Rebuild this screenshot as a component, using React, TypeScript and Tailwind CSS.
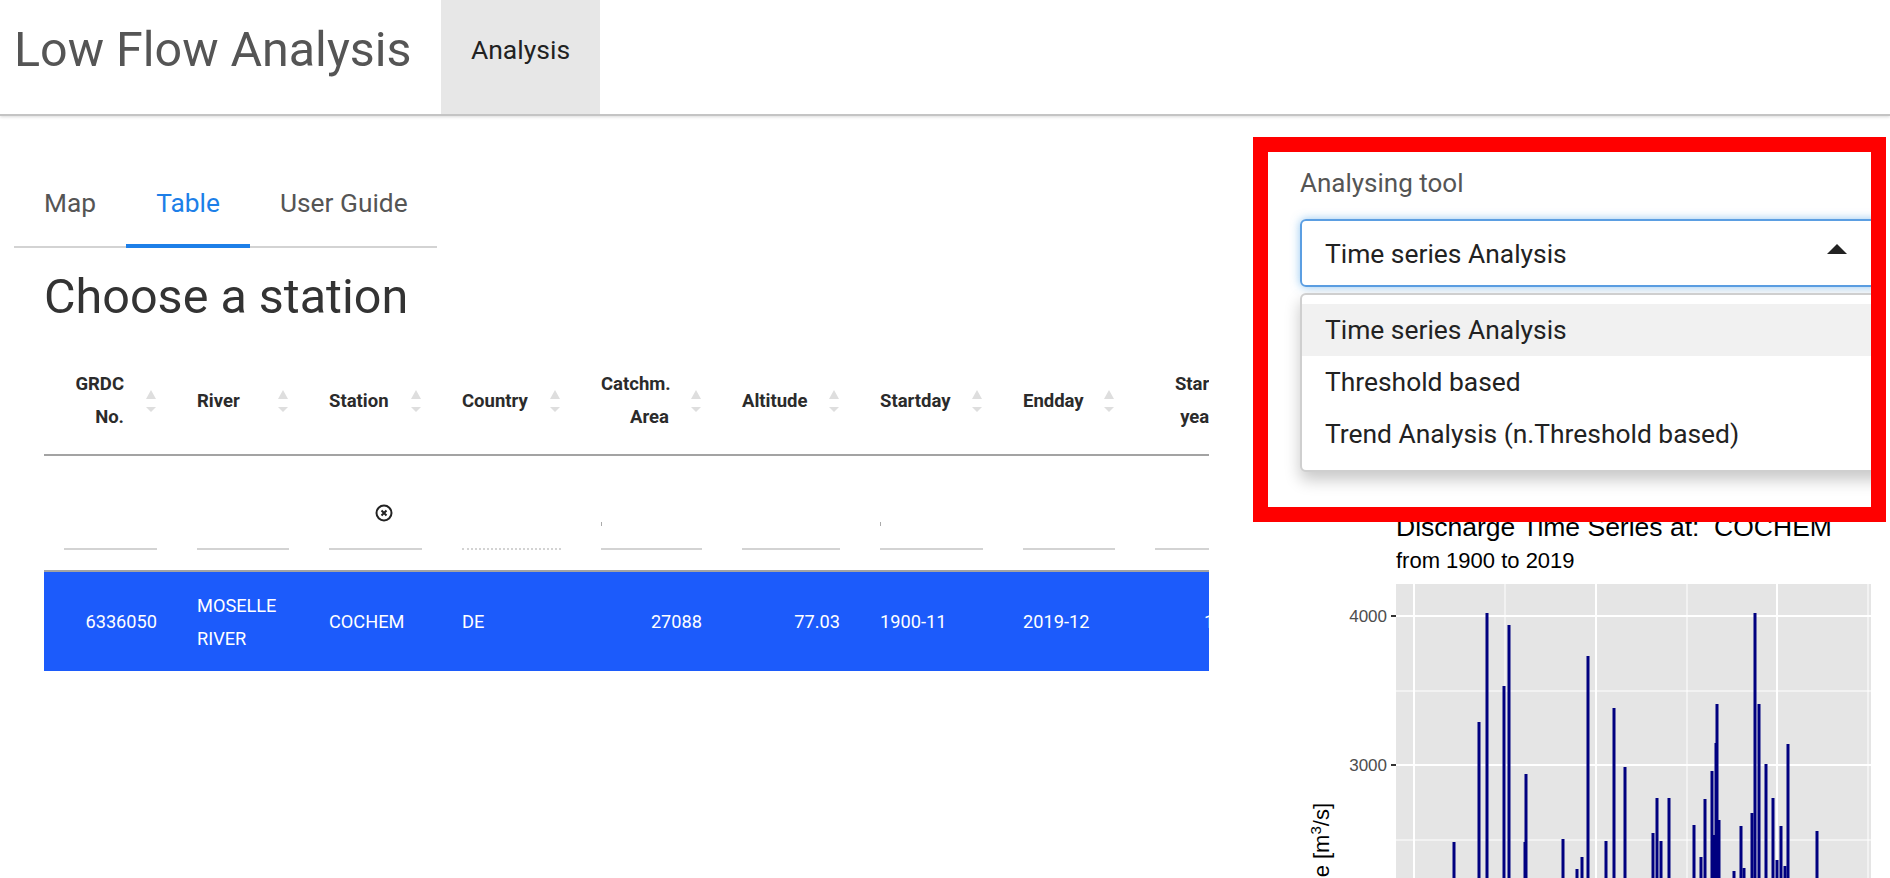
import { JSX } from 'react'

type Col = {
  label: string[]
  width: string
  right?: boolean
  value: string[]
  dotted?: boolean
  mark?: boolean
}

const columns: Col[] = [
  { label: ['GRDC', 'No.'], width: 'w-[133px]', right: true, value: ['6336050'] },
  { label: ['River'], width: 'w-[132px]', value: ['MOSELLE', 'RIVER'] },
  { label: ['Station'], width: 'w-[133px]', value: ['COCHEM'] },
  { label: ['Country'], width: 'w-[139px]', value: ['DE'], dotted: true },
  { label: ['Catchm.', 'Area'], width: 'w-[141px]', right: true, value: ['27088'], mark: true },
  { label: ['Altitude'], width: 'w-[138px]', right: true, value: ['77.03'] },
  { label: ['Startday'], width: 'w-[143px]', value: ['1900-11'], mark: true },
  { label: ['Endday'], width: 'w-[132px]', value: ['2019-12'] },
  { label: ['Start', 'year'], width: 'w-[134px]', right: true, value: ['1900'] }
]

// [x, top] read off the plot, in page pixels
const bars: number[][] = [
  [1454, 842], [1479, 722], [1487, 613], [1504, 686], [1509, 625], [1525, 842], [1526, 774],
  [1563, 839], [1577, 869], [1582, 857], [1588, 656], [1606, 841], [1614, 708], [1625, 767],
  [1653, 833], [1657, 798], [1661, 841], [1669, 798], [1694, 825], [1701, 857], [1705, 799],
  [1712, 771], [1716, 743], [1717, 704], [1719, 820], [1714, 835], [1734, 871], [1741, 826],
  [1744, 868], [1752, 813], [1755, 613], [1759, 704], [1766, 764], [1773, 798], [1777, 860],
  [1781, 826], [1785, 866], [1788, 744], [1817, 831]
]

function SortArrows(): JSX.Element {
  return (
    <span className="absolute right-[21px] top-1/2 -translate-y-1/2 flex flex-col items-center gap-[8px]">
      <span className="w-0 h-0 border-x-[5px] border-x-transparent border-b-[9px] border-b-[#dedede]" />
      <span className="w-0 h-0 border-x-[5px] border-x-transparent border-t-[5px] border-t-[#dedede]" />
    </span>
  )
}

function ClearIcon(): JSX.Element {
  return (
    <svg width="18" height="18" viewBox="0 0 18 18" className="absolute left-[66px] top-[48px]">
      <circle cx="9" cy="9" r="7.5" fill="none" stroke="#222" strokeWidth="2" />
      <path d="M6.5 6.5 L11.5 11.5 M11.5 6.5 L6.5 11.5" stroke="#222" strokeWidth="2" />
    </svg>
  )
}

function StationTable(): JSX.Element {
  return (
    <div className="w-[1165px] overflow-hidden">
      <table className="table-fixed w-[1225px] border-collapse text-[18.5px]">
        <thead>
          <tr className="h-[107px] border-b-2 border-[#a3a3a3]">
            {columns.map((c) => (
              <th
                key={c.label[0]}
                className={`${c.width} relative p-0 pl-[20px] font-bold text-[#2b2b2b] leading-[33px] ${c.right ? 'text-right pr-[53px]' : 'text-left'}`}
              >
                {c.label.map((l) => (
                  <div key={l}>{l}</div>
                ))}
                <SortArrows />
              </th>
            ))}
          </tr>
          <tr className="h-[116px] border-b-2 border-[#a3a3a3]">
            {columns.map((c) => (
              <th key={c.label[0]} className="relative p-0 px-[20px] align-bottom pb-[20px]">
                {c.label[0] === 'Station' && <ClearIcon />}
                {c.mark && <span className="absolute left-[20px] bottom-[44px] w-[1px] h-[4px] bg-[#aaaaaa]" />}
                <div className={`border-b-2 border-[#d3d3d3] ${c.dotted ? 'border-dotted' : ''}`} />
              </th>
            ))}
          </tr>
        </thead>
        <tbody>
          <tr className="h-[100px] bg-[#1c5bfb] text-white text-[18.2px]">
            {columns.map((c) => (
              <td
                key={c.label[0]}
                className={`p-0 pl-[20px] leading-[33px] ${c.right ? 'text-right' : 'text-left'} ${c.label[0] === 'Start' ? 'pr-[24px]' : 'pr-[20px]'}`}
              >
                {c.value.map((v) => (
                  <div key={v}>{v}</div>
                ))}
              </td>
            ))}
          </tr>
        </tbody>
      </table>
    </div>
  )
}

function ToolSelect(): JSX.Element {
  return (
    <div className="relative z-10 h-[385px] border-[15px] border-[#ff0000] bg-white overflow-hidden pl-[32px] pt-[15px]">
      <div className="text-[26px] leading-[32px] text-[#555555]">Analysing tool</div>
      <div className="mt-[20px] w-[600px] h-[68px] flex items-center justify-between pl-[23px] pr-[51px] border-2 border-[#5b9ee2] rounded-[6px] shadow-[0_0_10px_rgba(102,175,233,0.7)] text-[26.4px] text-[#222222]">
        <span className="pt-[4px]">Time series Analysis</span>
        <span className="w-0 h-0 mb-[8px] border-x-[10px] border-x-transparent border-b-[10px] border-b-[#222222]" />
      </div>
      <div className="mt-[6px] w-[600px] h-[179px] pt-[9px] border-2 border-[#cfcfcf] rounded-[6px] bg-white shadow-[0_8px_16px_rgba(0,0,0,0.22)] text-[26.4px] text-[#222222]">
        <div className="h-[52px] flex items-center pl-[23px] pt-[2px] bg-[#f1f1f1]">Time series Analysis</div>
        <div className="h-[52px] flex items-center pl-[23px] pt-[2px]">Threshold based</div>
        <div className="h-[52px] flex items-center pl-[23px] pt-[2px]">Trend Analysis (n.Threshold based)</div>
      </div>
    </div>
  )
}

function DischargePlot(): JSX.Element {
  return (
    <div className="-mt-[13px] font-['Liberation_Sans',sans-serif] text-black">
      <div className="pl-[143px] text-[26.5px] leading-[36px] whitespace-pre">Discharge Time Series at:  COCHEM</div>
      <div className="pl-[143px] mt-[3px] text-[22px] leading-[26px]">from 1900 to 2019</div>
      <svg width="637" height="295" viewBox="1253 583 637 295" className="block mt-[9px]">
        <rect x="1396" y="584" width="475" height="294" fill="#e5e5e5" />
        {[691, 840].map((y) => (
          <line key={y} x1="1396" x2="1871" y1={y} y2={y} stroke="#fff" strokeWidth="1" />
        ))}
        {[1505, 1687, 1868].map((x) => (
          <line key={x} x1={x} x2={x} y1="584" y2="878" stroke="#fff" strokeWidth="1" />
        ))}
        {[616, 765].map((y) => (
          <line key={y} x1="1396" x2="1871" y1={y} y2={y} stroke="#fff" strokeWidth="2" />
        ))}
        {[1414, 1596, 1777].map((x) => (
          <line key={x} x1={x} x2={x} y1="584" y2="878" stroke="#fff" strokeWidth="2" />
        ))}
        {bars.map(([x, top]) => (
          <rect key={`${x}-${top}`} x={x - 1.5} y={top} width="3" height={878 - top} fill="#000080" />
        ))}
        <line x1="1391" x2="1396" y1="616" y2="616" stroke="#333" strokeWidth="2" />
        <line x1="1391" x2="1396" y1="765" y2="765" stroke="#333" strokeWidth="2" />
        <text x="1387" y="622" textAnchor="end" className="text-[17px] fill-[#4d4d4d]">4000</text>
        <text x="1387" y="771" textAnchor="end" className="text-[17px] fill-[#4d4d4d]">3000</text>
        <text transform="translate(1329 803) rotate(-90)" textAnchor="end" className="text-[22px] fill-black">
          Discharge [m<tspan dy="-8" className="text-[15px]">3</tspan><tspan dy="8">/s]</tspan>
        </text>
      </svg>
    </div>
  )
}

export default function App(): JSX.Element {
  return (
    <div className="h-screen overflow-hidden bg-white font-['Roboto',sans-serif]">
      <nav className="h-[116px] flex items-stretch pl-[14px] border-b-2 border-[#c4c4c4] shadow-[0_1px_3px_rgba(0,0,0,0.15)]">
        <div className="w-[427px] flex items-center pb-[14px] text-[48.4px] text-[#555555]">Low Flow Analysis</div>
        <div className="w-[159px] flex items-center justify-center pb-[14px] bg-[#e7e7e7] text-[26.5px] text-[#222222]">
          Analysis
        </div>
      </nav>
      <div className="flex pt-[21px]">
        <div className="w-[1253px] pl-[14px]">
          <div className="mt-[36px] w-[423px] h-[75px] flex border-b-2 border-[#d3d3d3] text-[26.3px] text-[#555555]">
            <div className="w-[112px] pl-[30px] pt-[11px]">Map</div>
            <div className="w-[124px] -mb-[2px] pt-[11px] text-center text-[#1d7fe8] border-b-[4px] border-[#1d7fe8]">Table</div>
            <div className="pl-[30px] pt-[11px]">User Guide</div>
          </div>
          <h1 className="pl-[30px] mt-[19px] text-[48.5px] leading-[60px] text-[#333333]">Choose a station</h1>
          <div className="pl-[30px] mt-[21px]">
            <StationTable />
          </div>
        </div>
        <div className="w-[633px]">
          <ToolSelect />
          <DischargePlot />
        </div>
      </div>
    </div>
  )
}
